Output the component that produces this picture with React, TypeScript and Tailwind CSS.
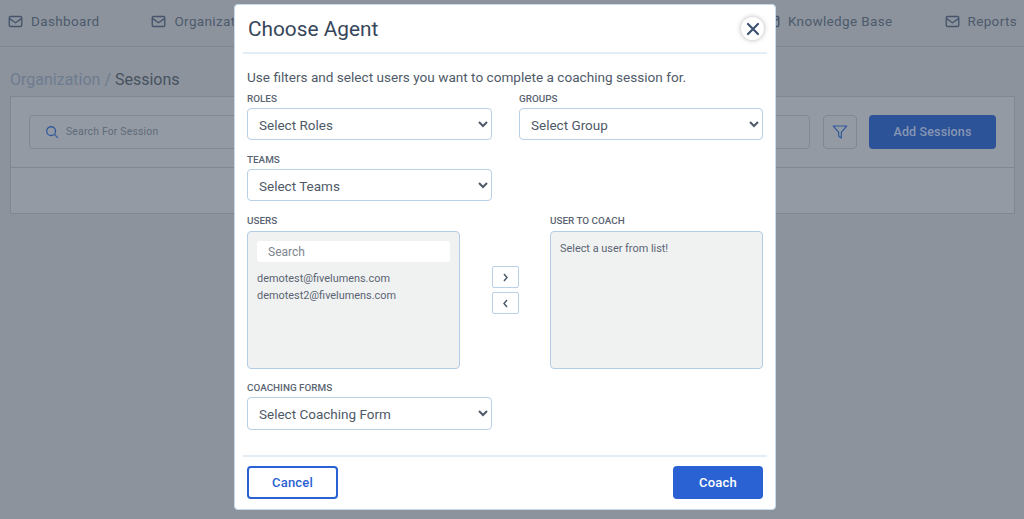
import React from "react";

const Mail = () => (
  <svg width="15" height="15" viewBox="0 0 24 24" fill="none" stroke="#46556b" strokeWidth="2.2" className="shrink-0">
    <rect x="2" y="4" width="20" height="16" rx="2" />
    <path d="M2 7l10 7 10-7" />
  </svg>
);

const NavItem = ({ label }: { label: string }) => (
  <div className="flex items-center gap-[8px]">
    <Mail />
    <span className="text-[13.5px] leading-none tracking-[0.35px] text-[#4d5a6c]">{label}</span>
  </div>
);

const Label = ({ children }: { children: React.ReactNode }) => (
  <div className="text-[9.9px] leading-[12px] font-medium text-[#5a6472]">{children}</div>
);

const Select = ({ text, size }: { text: string; size: string }) => (
  <select className={"mt-[3px] block rounded-[4px] border border-[#b9d0e6] bg-white pl-[7px] pt-[1px] text-[13.5px] text-[#4f5a68] outline-none " + size}>
    <option>{text}</option>
  </select>
);

export default function App() {
  return (
    <div className="relative h-[519px] w-[1024px] overflow-hidden bg-[#8c939d] font-['Roboto',sans-serif]">
      <nav className="flex h-[47px] items-center justify-between border-b border-[#7f8793] pl-[8px] pr-[7px] pb-[3px]">
        <div className="flex gap-[52px]">
          <NavItem label="Dashboard" />
          <NavItem label="Organization" />
        </div>
        <div className="flex gap-[52px]">
          <NavItem label="Knowledge Base" />
          <NavItem label="Reports" />
        </div>
      </nav>
      <div className="pl-[10px] pr-[9px]">
        <div className="mt-[23px] h-[19px] text-[16px] leading-[19px]">
          <span className="text-[#6e7c8f]">Organization / </span>
          <span className="text-[#47525f]">Sessions</span>
        </div>
        <div className="mt-[7px] h-[118px] border border-[#7f8793] bg-[#939aa4]">
          <div className="flex h-[71px] items-center border-b border-[#7f8793] px-[18px]">
            <div className="flex h-[34px] flex-1 items-center gap-[7px] rounded-[4px] border border-[#7f8793] pl-[15px]">
              <svg width="14" height="14" viewBox="0 0 24 24" fill="none" stroke="#33599c" strokeWidth="2.2">
                <circle cx="10.5" cy="10.5" r="7.5" />
                <path d="M16 16l6 6" />
              </svg>
              <span className="text-[10.4px] tracking-[0.2px] text-[#5f6a78]">Search For Session</span>
            </div>
            <div className="ml-[13px] flex h-[34px] w-[34px] items-center justify-center rounded-[4px] border border-[#7f8793]">
              <svg width="16" height="16" viewBox="0 0 24 24" fill="none" stroke="#33599c" strokeWidth="1.8" strokeLinejoin="round">
                <path d="M2 3h20l-8 9.500V21l-4-2.500v-6z" />
              </svg>
            </div>
            <div className="ml-[12px] flex h-[34px] w-[127px] items-center justify-center rounded-[4px] bg-[#2c5298] text-[12.5px] font-medium tracking-[0.15px] text-[#8797b3]">
              Add Sessions
            </div>
          </div>
        </div>
      </div>

      <div className="absolute left-[234px] top-[4px] h-[506px] w-[542px] rounded-[4px] border border-[#c9dcee] bg-white px-[8px]">
        <div className="relative h-[49px] border-b-2 border-[#e3edf6] pl-[5px] pt-[11px] text-[20.8px] leading-[26px] text-[#37465a]">
          Choose Agent
          <button className="absolute right-[3px] top-[12px] flex h-[23px] w-[23px] items-center justify-center rounded-full bg-white shadow-[0_0_5px_rgba(0,0,0,0.3)]">
            <svg width="14" height="14" viewBox="0 0 14 14" fill="none" stroke="#3d5270" strokeWidth="2.2" strokeLinecap="round">
              <path d="M2 2l10 10M12 2L2 12" />
            </svg>
          </button>
        </div>
        <div className="px-[4px]">
          <p className="mt-[15px] h-[17px] text-[13.6px] leading-[17px] text-[#4f5a68]">
            Use filters and select users you want to complete a coaching session for.
          </p>
          <div className="mt-[7px] flex gap-[27px]">
            <div>
              <Label>ROLES</Label>
              <Select text="Select Roles" size="h-[32px] w-[245px]" />
            </div>
            <div>
              <Label>GROUPS</Label>
              <Select text="Select Group" size="h-[32px] w-[244px]" />
            </div>
          </div>
          <div className="mt-[14px]">
            <Label>TEAMS</Label>
            <Select text="Select Teams" size="h-[32px] w-[245px]" />
          </div>
          <div className="mt-[14px] flex">
            <div>
              <Label>USERS</Label>
              <div className="mt-[4px] h-[138px] w-[213px] rounded-[4px] border border-[#b3cde6] bg-[#f0f2f2] px-[9px] pt-[9px]">
                <div className="flex h-[21px] items-center rounded-[3px] bg-white pl-[11px] pt-[1px] text-[12px] text-[#7d8590]">Search</div>
                <div className="mt-[8px] text-[10.9px] leading-[17px] text-[#5a6472]">
                  <div>demotest@fivelumens.com</div>
                  <div>demotest2@fivelumens.com</div>
                </div>
              </div>
            </div>
            <div className="ml-[32px] mt-[51px] flex flex-col gap-[4px]">
              <button className="flex h-[22px] w-[27px] items-center justify-center rounded-[2px] border border-[#b9d0e6] bg-white">
                <svg width="7" height="9" viewBox="0 0 7 9" fill="none" stroke="#46556b" strokeWidth="1.4"><path d="M2 1l3 3.500L2 8" /></svg>
              </button>
              <button className="flex h-[22px] w-[27px] items-center justify-center rounded-[2px] border border-[#b9d0e6] bg-white">
                <svg width="7" height="9" viewBox="0 0 7 9" fill="none" stroke="#46556b" strokeWidth="1.4"><path d="M5 1L2 4.500 5 8" /></svg>
              </button>
            </div>
            <div className="ml-[31px]">
              <Label>USER TO COACH</Label>
              <div className="mt-[4px] h-[138px] w-[213px] rounded-[4px] border border-[#b3cde6] bg-[#f0f2f2] pl-[9px] pt-[10px] text-[10.9px] leading-[14px] text-[#5a6472]">
                Select a user from list!
              </div>
            </div>
          </div>
          <div className="mt-[13px]">
            <Label>COACHING FORMS</Label>
            <Select text="Select Coaching Form" size="h-[33px] w-[245px]" />
          </div>
        </div>
        <div className="mt-[25px] flex justify-between border-t-2 border-[#e3edf6] px-[4px] pt-[9px]">
          <button className="h-[33px] w-[91px] rounded-[4px] border-2 border-[#2a62d3] bg-white text-[13px] font-medium tracking-[0.2px] text-[#2a62d3]">
            Cancel
          </button>
          <button className="h-[33px] w-[90px] rounded-[4px] bg-[#2a62d3] text-[13px] font-medium tracking-[0.2px] text-white">
            Coach
          </button>
        </div>
      </div>
    </div>
  );
}
